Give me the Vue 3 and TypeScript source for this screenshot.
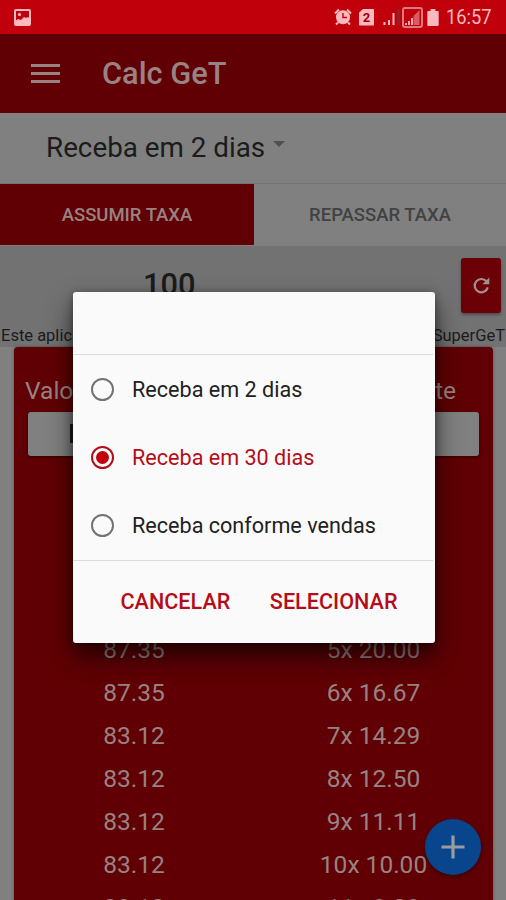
<script setup lang="ts">
import { ref } from 'vue'

interface Option {
  id: number
  label: string
}
interface Row {
  value: string
  plan: string
}

const options: Option[] = [
  { id: 0, label: 'Receba em 2 dias' },
  { id: 1, label: 'Receba em 30 dias' },
  { id: 2, label: 'Receba conforme vendas' },
]
const selected = ref(1)

const rows: Row[] = [
  { value: '87.35', plan: '5x 20.00' },
  { value: '87.35', plan: '6x 16.67' },
  { value: '83.12', plan: '7x 14.29' },
  { value: '83.12', plan: '8x 12.50' },
  { value: '83.12', plan: '9x 11.11' },
  { value: '83.12', plan: '10x 10.00' },
  { value: '83.12', plan: '11x 9.09' },
]
</script>

<template>
  <div class="screen">
    <header class="status">
      <svg class="photo" viewBox="0 0 17 17">
        <rect x="1" y="1" width="15" height="15" rx="1" fill="none" stroke="#fbb9be" stroke-width="2" />
        <path d="M1 12l3-2 3 1 3-3 2 1 2-1 2 2v6H1z" fill="#fbb9be" />
        <circle cx="5.500" cy="5.500" r="1.600" fill="#fbb9be" />
      </svg>
      <div class="tray">
        <svg class="alarm" viewBox="0 0 18 18">
          <circle cx="9" cy="9.300" r="7" fill="#fbb9be" />
          <path d="M1 5.500l4-4M17 5.500l-4-4M4 14.500l-2 2M14 14.500l2 2" stroke="#fbb9be" stroke-width="2" />
          <path d="M9 5v4.500h4" fill="none" stroke="#c0000b" stroke-width="1.400" />
        </svg>
        <div class="sim">2</div>
        <svg class="signal" viewBox="0 0 18 18">
          <path d="M1.500 17v-3M6 17v-5M10.500 17V5" stroke="#fbb9be" stroke-width="2" />
          <path d="M15.500 17V1" stroke="#87272c" stroke-width="2.500" />
        </svg>
        <svg class="boxed" viewBox="0 0 21 21">
          <rect x="1" y="1" width="19" height="19" rx="2" fill="none" stroke="#dc7b7f" stroke-width="2" />
          <path d="M11.500 18V9l6-6v15z" fill="#dc5b61" />
          <path d="M4 18v-2M7 18v-4M10 18v-7" stroke="#fbb9be" stroke-width="1.800" />
        </svg>
        <svg class="battery" viewBox="0 0 12 18">
          <path d="M3.500 0h5v2H11a1 1 0 0 1 1 1v14a1 1 0 0 1-1 1H1a1 1 0 0 1-1-1V3a1 1 0 0 1 1-1h2.500z" fill="#fbb9be" />
        </svg>
        <span class="clock">16:57</span>
      </div>
    </header>

    <div class="appbar">
      <div class="burger"><i></i><i></i><i></i></div>
      <h1>Calc GeT</h1>
    </div>

    <div class="picker">
      <span>Receba em 2 dias</span>
      <i class="caret"></i>
    </div>

    <nav class="tabs">
      <div class="tab active"><span>ASSUMIR TAXA</span></div>
      <div class="tab"><span>REPASSAR TAXA</span></div>
    </nav>

    <section class="amount">
      <div class="entry">
        <span class="sum">100</span>
        <button class="reload" type="button">
          <svg viewBox="0 0 20 20">
            <path d="M15.600 6.200A7 7 0 1 0 16.600 12" fill="none" stroke="#a4908f" stroke-width="2.300" />
            <path d="M18.200 1.500v7.300h-7.300z" fill="#a4908f" />
          </svg>
        </button>
      </div>
      <div class="notice"><span>Este aplic</span><span>SuperGeT</span></div>
    </section>

    <main class="card">
      <div class="heads"><span>Valo</span><span>te</span></div>
      <div class="field"><i></i></div>
      <div class="table">
        <div v-for="(row, i) in rows" :key="i" class="row">
          <span>{{ row.value }}</span>
          <span>{{ row.plan }}</span>
        </div>
      </div>
    </main>

    <button class="fab" type="button">
      <svg viewBox="0 0 24 24"><path d="M12 .5v23M.5 12h23" stroke="#989ca0" stroke-width="3.200" /></svg>
    </button>

    <div class="dialog" role="dialog">
      <div class="head"></div>
      <div class="options">
        <label
          v-for="option in options"
          :key="option.id"
          class="option"
          :class="{ checked: option.id === selected }"
          @click="selected = option.id"
        >
          <span class="radio"></span>
          <span class="label">{{ option.label }}</span>
        </label>
      </div>
      <div class="actions">
        <button type="button">CANCELAR</button>
        <button type="button">SELECIONAR</button>
      </div>
    </div>
  </div>
</template>

<style>
body {
  margin: 0;
  overflow: hidden;
}
</style>

<style scoped>
* {
  box-sizing: border-box;
}
.screen {
  position: relative;
  width: 506px;
  height: 900px;
  overflow: hidden;
  display: flex;
  flex-direction: column;
  background: #808080;
  font-family: Roboto, 'Liberation Sans', sans-serif;
  white-space: nowrap;
}
button {
  border: 0;
  padding: 0;
  background: none;
  font-family: inherit;
}
svg {
  display: block;
}
.status {
  flex: none;
  height: 34px;
  padding: 0 14px;
  display: flex;
  align-items: center;
  justify-content: space-between;
  background: #c0000b;
}
.photo {
  width: 17px;
  height: 17px;
}
.tray {
  display: flex;
  align-items: center;
  margin-right: 1px;
}
.alarm {
  width: 18px;
  height: 18px;
}
.sim {
  width: 15px;
  height: 17px;
  margin-left: 7px;
  border-radius: 1px;
  background: #fbb9be;
  clip-path: polygon(30% 0, 100% 0, 100% 100%, 0 100%, 0 25%);
  color: #a1000a;
  font-size: 13px;
  font-weight: 700;
  line-height: 18px;
  text-align: center;
}
.signal {
  width: 18px;
  height: 18px;
  margin-left: 9px;
}
.boxed {
  width: 21px;
  height: 21px;
  margin-left: 1px;
}
.battery {
  width: 12px;
  height: 17px;
  margin-left: 4px;
}
.clock {
  width: 45px;
  margin-left: 7px;
  color: #fbb9be;
  font-size: 21px;
  line-height: 35px;
  transform: scaleX(0.87);
  transform-origin: left;
}
.appbar {
  flex: none;
  height: 79px;
  padding-left: 31px;
  display: flex;
  align-items: center;
  background: #600004;
  color: #988382;
}
.burger {
  width: 29px;
  display: flex;
  flex-direction: column;
  gap: 5px;
}
.burger i {
  height: 3px;
  background: #988382;
}
h1 {
  margin: 0 0 0 42px;
  font-size: 30.8px;
  font-weight: 500;
  line-height: 40px;
}
.picker {
  flex: none;
  height: 71px;
  padding: 0 0 1px 46px;
  display: flex;
  align-items: center;
  border-bottom: 1px solid #747474;
  color: #1b1b1b;
  font-size: 27.8px;
}
.caret {
  margin: -8px 0 0 8px;
  border: 6.5px solid transparent;
  border-top-color: #4f4f4f;
  border-bottom: 0;
}
.tabs {
  flex: none;
  height: 62px;
  display: flex;
  padding-bottom: 1px;
}
.tab {
  flex: 1;
  display: flex;
  align-items: center;
  justify-content: center;
  color: #424242;
  font-size: 18.5px;
  font-weight: 500;
}
.tab.active {
  flex: 0 0 254px;
  background: #600004;
  color: #988382;
}
.amount {
  flex: none;
  height: 101px;
  background: #727272;
}
.entry {
  height: 78px;
  padding: 12px 5px 11px 143px;
  display: flex;
  justify-content: space-between;
}
.sum {
  color: #1b1b1b;
  font-size: 30.8px;
  font-weight: 500;
  line-height: 54px;
}
.reload {
  width: 40px;
  height: 55px;
  display: flex;
  align-items: center;
  justify-content: center;
  border-radius: 3px;
  background: #6b0006;
  box-shadow: 0 2px 3px #00000055;
}
.reload svg {
  width: 19px;
  height: 19px;
}
.notice {
  display: flex;
  justify-content: space-between;
  padding: 0 1px;
  color: #1b1b1b;
  font-size: 16.5px;
  line-height: 24px;
}
.card {
  flex: 1;
  margin: 0 13px 0 14px;
  border-radius: 4px 4px 0 0;
  background: #600004;
  color: #988382;
  font-size: 24.500px;
  box-shadow: 0 0 3px #00000066;
}
.heads {
  height: 65px;
  padding: 24px 37px 0 11px;
  display: flex;
  justify-content: space-between;
  line-height: 40px;
}
.field {
  height: 44px;
  margin: 0 14px;
  padding: 12px 0 0 42px;
  border-radius: 3px;
  background: #808080;
  box-shadow: 0 1px 3px #00000088;
}
.field i {
  display: block;
  width: 5px;
  height: 19px;
  background: #1b1b1b;
}
.table {
  padding-top: 172px;
}
.row {
  height: 43px;
  display: grid;
  grid-template-columns: 240px 239px;
  line-height: 43px;
  text-align: center;
}
.fab {
  position: absolute;
  left: 425px;
  top: 819px;
  width: 56px;
  height: 56px;
  border-radius: 50%;
  display: flex;
  align-items: center;
  justify-content: center;
  background: #08458c;
  box-shadow: 0 2px 5px #00000066;
}
.fab svg {
  width: 24px;
  height: 24px;
}
.dialog {
  position: absolute;
  left: 72.5px;
  top: 292px;
  width: 362px;
  height: 351px;
  border-radius: 3px;
  background: #fafafa;
  box-shadow: 0 14px 26px 0 #0000009c, 0 2px 8px #00000060;
}
.head {
  height: 63px;
  margin-right: 2px;
  border-bottom: 1px solid #d9dcdc;
}
.options {
  height: 206px;
  margin-right: 2px;
  border-bottom: 1px solid #d7dcdd;
}
.option {
  height: 68px;
  padding-left: 18px;
  display: flex;
  align-items: center;
  color: #212121;
  font-size: 21.6px;
}
.radio {
  display: flex;
  width: 23px;
  height: 23px;
  padding: 3px;
  border: 2.500px solid #737373;
  border-radius: 50%;
}
.label {
  margin-left: 18.500px;
}
.checked {
  color: #b50d18;
}
.checked .radio {
  border-color: #b50d18;
}
.checked .radio::before {
  content: '';
  flex: 1;
  border-radius: 50%;
  background: #c0000b;
}
.actions {
  height: 82px;
  padding: 0 37px 2px 48px;
  display: flex;
  align-items: center;
  justify-content: space-between;
}
.actions button {
  color: #b50d18;
  font-size: 21.6px;
  font-weight: 500;
}
</style>
